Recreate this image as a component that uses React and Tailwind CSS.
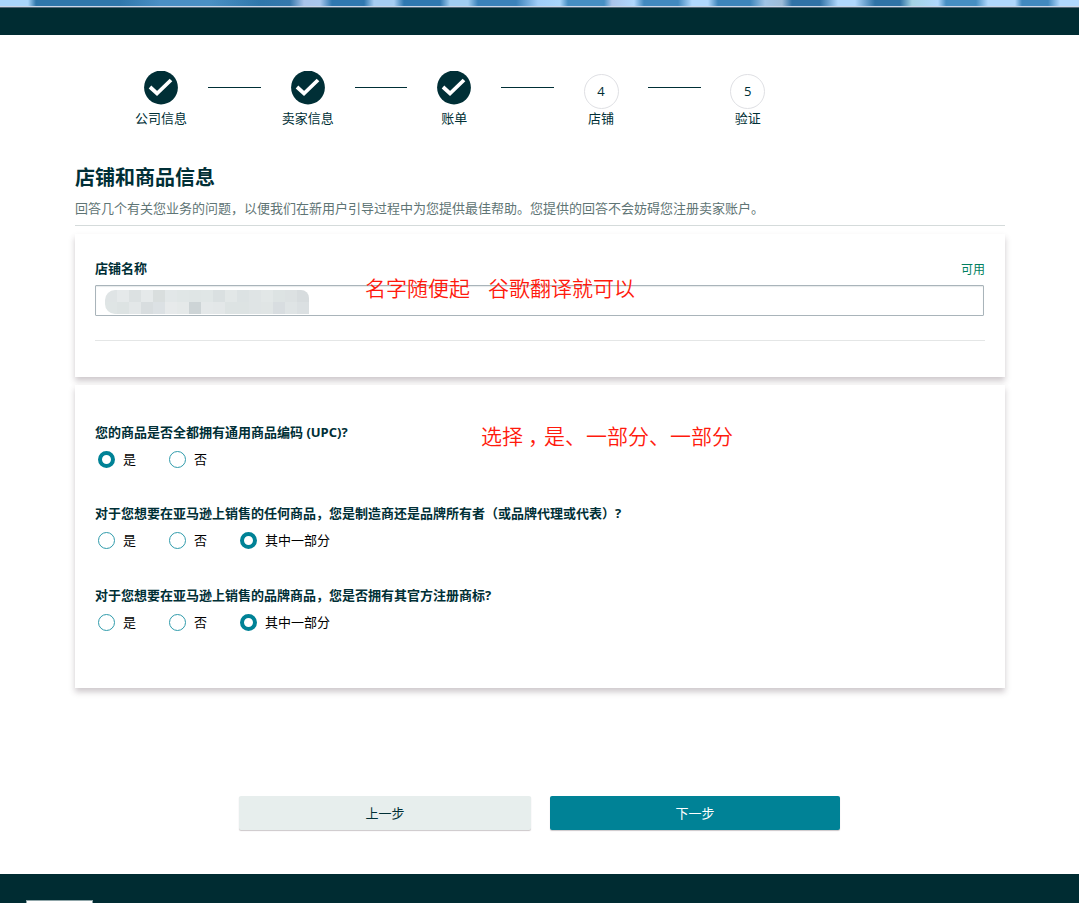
import React, { useState } from "react";

const steps = [
    { label: "公司信息", done: true },
    { label: "卖家信息", done: true },
    { label: "账单", done: true },
    { label: "店铺", done: false },
    { label: "验证", done: false }
];

const questions = [
    {
        id: "upc",
        title: "您的商品是否全都拥有通用商品编码 (UPC)?",
        options: ["是", "否"],
        initial: "是"
    },
    {
        id: "manufacturer",
        title: "对于您想要在亚马逊上销售的任何商品，您是制造商还是品牌所有者（或品牌代理或代表）?",
        options: ["是", "否", "其中一部分"],
        initial: "其中一部分"
    },
    {
        id: "trademark",
        title: "对于您想要在亚马逊上销售的品牌商品，您是否拥有其官方注册商标?",
        options: ["是", "否", "其中一部分"],
        initial: "其中一部分"
    }
];

// shades of the pixelated store name, two rows of 17 cells
const mosaic = [
    "#dfe4e5", "#e5e9ea", "#dce1e2", "#e5e9ea", "#d9dede", "#e2e7e8", "#e0e6e6", "#dfe5e5", "#e0e6e6",
    "#dae0e1", "#e2e7e7", "#dce2e3", "#dfe4e5", "#e2e7e7", "#dde3e3", "#dce1e2", "#d7dcde",
    "#dfe5e5", "#dde3e3", "#e3e7e8", "#d8dddf", "#dce1e4", "#e7eaeb", "#e5e9e9", "#cdd4d6", "#e4e8e9",
    "#e3e7e8", "#dde3e3", "#dde3e3", "#dfe4e5", "#e0e5e5", "#d8dde0", "#dfe4e5", "#dbe0e2"
];

const StepIcon = ({ done, number }) => {
    if (done) {
        return (
            <svg className="block mb-1" width="34" height="34" viewBox="0 0 34 34">
                <circle cx="17" cy="16.5" r="16.9" fill="#002f36" />
                <path d="M6 16L13 22.5L27 9" fill="none" stroke="#fff" strokeWidth="3.8" />
            </svg>
        );
    }
    return (
        <div className="mt-[3px] w-[35px] h-[35px] rounded-full border border-[#dfe0e4] flex items-center justify-center">
            {number}
        </div>
    );
};

const Stepper = () => (
    <div className="flex ml-[114px] pt-9">
        {steps.map((step, index) => (
            <React.Fragment key={step.label}>
                {index > 0 && <div className="w-[52.7px] h-px mt-4 bg-[#002f36]"></div>}
                <div className="w-[94px] flex flex-col items-center">
                    <StepIcon done={step.done} number={index + 1} />
                    <span className="leading-[18px]">{step.label}</span>
                </div>
            </React.Fragment>
        ))}
    </div>
);

const Radio = ({ label, checked, onSelect }) => (
    <button type="button" onClick={onSelect} className="flex items-center gap-2 text-black">
        <span
            className={
                checked
                    ? "w-[17px] h-[17px] rounded-full border-4 border-[#008296]"
                    : "w-[17px] h-[17px] rounded-full border border-[#2f9bab]"
            }
        ></span>
        <span className="leading-[17px]">{label}</span>
    </button>
);

const Question = ({ question }) => {
    const [value, setValue] = useState(question.initial);

    return (
        <div>
            <h3 className="font-bold leading-5">{question.title}</h3>
            <div className="flex gap-[33px] ml-[3px] mt-[9px]">
                {question.options.map(option => (
                    <Radio
                        key={option}
                        label={option}
                        checked={value === option}
                        onSelect={() => setValue(option)}
                    />
                ))}
            </div>
        </div>
    );
};

const App = () => {
    return (
        <div className="w-[1079px] h-[903px] overflow-hidden flex flex-col bg-white text-[13px] text-[#002f36] font-['Open_Sans','Noto_Sans_CJK_SC',sans-serif]">
            <div className="h-[6px] shrink-0 bg-[linear-gradient(90deg,#a9d6fb_0px,#a9d6fb_28px,#2f77ab_36px,#2f77ab_120px,#4a8fc4_160px,#4a90c4_210px,#2f77ab_260px,#3578ac_290px,#a9c4ea_304px,#a9c8ee_320px,#2f78b0_332px,#2f78b0_364px,#a6cdf2_374px,#a6cdf2_394px,#2f78b0_404px,#2f78b0_440px,#a0cdf1_450px,#a0cdf1_468px,#3a82ba_478px,#3a82ba_516px,#a0cdf8_538px,#a9d6fb_560px,#468fc3_568px,#468fc3_604px,#a9c4ea_612px,#b0d8fd_634px,#4189bf_644px,#4189bf_678px,#b0d8fd_692px,#b0d8fd_708px,#3d85bb_718px,#3d85bb_750px,#9fc4e6_765px,#9dbcd8_782px,#3072a6_792px,#3072a6_820px,#b0d8fd_838px,#b0d8fd_855px,#2f73a6_875px,#2f73a6_900px,#a4d3e4_912px,#b0d8fd_938px,#468fc3_946px,#468fc3_976px,#b0d8fd_988px,#b0d8fd_1015px,#4189bf_1022px,#4189bf_1048px,#b0d8fd_1060px,#b0d8fd_1079px)]"></div>
            <div className="h-px shrink-0 bg-[#ccd8e8]"></div>
            <div className="h-7 shrink-0 border-t border-[#51697a] bg-[#002c32]"></div>

            <Stepper />

            <main className="mx-[75px] w-[930px] mt-[39px]">
                <h1 className="text-xl leading-6 font-bold">店铺和商品信息</h1>
                <p className="mt-[7px] h-[29px] leading-[22px] text-[#5f7575] border-b border-[#d5dbdb]">
                    回答几个有关您业务的问题，以便我们在新用户引导过程中为您提供最佳帮助。您提供的回答不会妨碍您注册卖家账户。
                </p>

                <section className="relative mt-2 h-[143px] px-5 pt-6 bg-white shadow-[0_4px_6px_0px_rgba(60,40,50,0.25)]">
                    <div className="flex justify-between h-5 leading-5">
                        <label className="font-bold">店铺名称</label>
                        <span className="text-xs leading-[23px] text-[#008060]">可用</span>
                    </div>
                    <div className="mt-[7px] w-[889px] h-[31px] pl-[9px] pt-1 border border-[#a9b4ba] rounded-[1px] shadow-[inset_0_1px_1px_#e7eaeb]">
                        <div className="grid grid-cols-17 w-[204px] h-6 rounded-l-[10px] rounded-tr-[8px] overflow-hidden">
                            {mosaic.map((color, index) => (
                                <span key={index} style={{ backgroundColor: color }}></span>
                            ))}
                        </div>
                    </div>
                    <hr className="mt-6 border-[#e4e6e6]" />
                    <p className="absolute left-[290px] top-[39px] flex gap-[18px] text-[21px] leading-[30px] font-[350] text-[#ff1a0d] whitespace-nowrap">
                        <span>名字随便起</span>
                        <span>谷歌翻译就可以</span>
                    </p>
                </section>

                <section className="relative mt-2 h-[303px] px-5 pt-[37px] bg-white shadow-[0_4px_6px_0px_rgba(60,40,50,0.25)]">
                    <div className="flex flex-col gap-[35.4px]">
                        {questions.map(question => (
                            <Question key={question.id} question={question} />
                        ))}
                    </div>
                    <p className="absolute left-[406px] top-[36px] flex text-[21px] leading-[30px] font-[350] text-[#ff1a0d] whitespace-nowrap">
                        <span>选择</span>
                        <span className="w-[21px] pl-[5px] [font-feature-settings:'halt']">，</span>
                        <span>是、一部分、一部分</span>
                    </p>
                </section>
            </main>

            <div className="flex gap-[19px] mt-[108px] ml-[239px] h-[34px] shrink-0">
                <button type="button" className="w-[292px] pt-px rounded-[2px] bg-[#e7eeed] shadow-[0_1px_1px_rgba(50,30,40,0.25)]">
                    上一步
                </button>
                <button type="button" className="w-[290px] pt-px rounded-[2px] bg-[#008296] text-white shadow-[0_1px_1px_rgba(50,30,40,0.25)]">
                    下一步
                </button>
            </div>

            <footer className="mt-auto h-[29px] shrink-0 pt-[26px] pl-[26px] bg-[#002c32]">
                <div className="w-[67px] h-[3px] bg-white border border-b-0 border-[#8fa5a8]"></div>
            </footer>
        </div>
    );
};

export default App;
